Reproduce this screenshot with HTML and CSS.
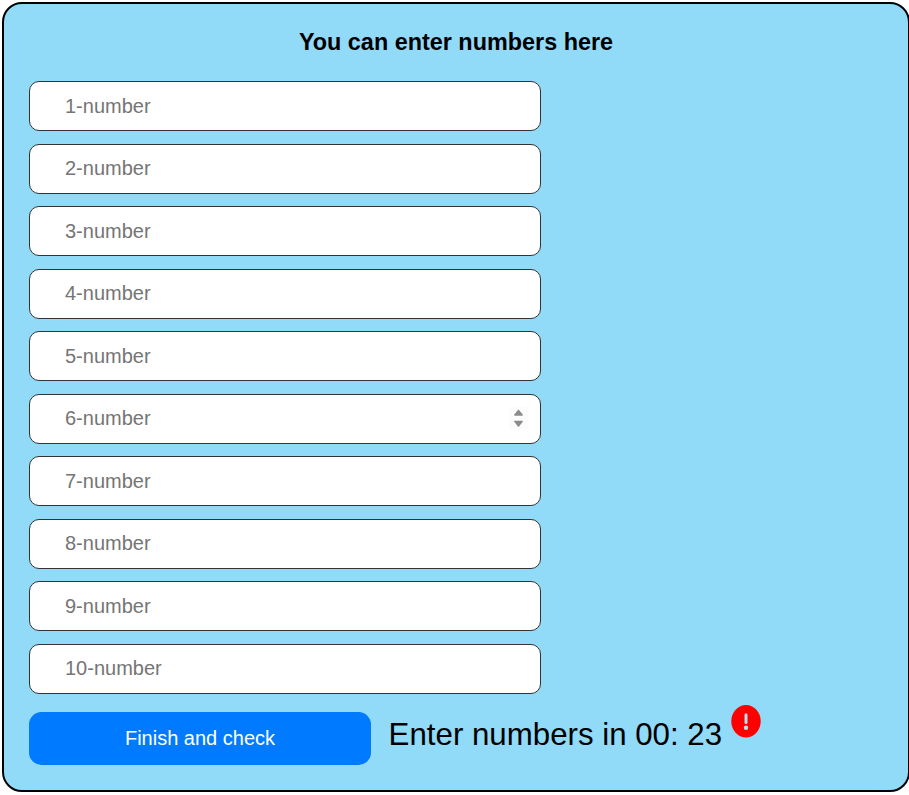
FILE: index.html
```html
<!DOCTYPE html>
<html lang="en">
<head>
<meta charset="utf-8">
<title>Numbers</title>
<link rel="stylesheet" href="styles.css">
</head>
<body>
<main class="panel">
  <h1 class="title">You can enter numbers here</h1>
  <form class="fields">
    <div class="field"><input class="input" type="text" placeholder="1-number"></div>
    <div class="field"><input class="input" type="text" placeholder="2-number"></div>
    <div class="field"><input class="input" type="text" placeholder="3-number"></div>
    <div class="field"><input class="input" type="text" placeholder="4-number"></div>
    <div class="field"><input class="input" type="text" placeholder="5-number"></div>
    <div class="field">
      <input class="input" type="text" placeholder="6-number">
      <svg class="spinner" width="19" height="22" viewBox="0 0 19 22">
        <rect width="19" height="22" fill="#fcfcfc"/>
        <path d="M9.5 3.4 13.2 8H5.8Z M9.5 19 13.2 14.4H5.8Z" fill="#8b8b8b" stroke="#8b8b8b" stroke-width="1.4" stroke-linejoin="round"/>
      </svg>
    </div>
    <div class="field"><input class="input" type="text" placeholder="7-number"></div>
    <div class="field"><input class="input" type="text" placeholder="8-number"></div>
    <div class="field"><input class="input" type="text" placeholder="9-number"></div>
    <div class="field"><input class="input" type="text" placeholder="10-number"></div>
  </form>
  <div class="footer">
    <button class="submit" type="button">Finish and check</button>
    <p class="timer">Enter numbers in 00: 23</p>
    <svg class="alert" width="30" height="33" viewBox="0 0 30 33">
      <ellipse cx="15" cy="16.3" rx="14.7" ry="16.2" fill="#f00"/>
      <path d="M15 9.7V17.4" stroke="#b9dff0" stroke-width="3" stroke-linecap="round"/>
      <ellipse cx="15" cy="22.8" rx="2.2" ry="2.3" fill="#b9dff0"/>
    </svg>
  </div>
</main>
</body>
</html>
```

FILE: styles.css
```css
* { box-sizing: border-box; }
html { overflow: hidden; }
body {
  margin: 0;
  padding: 2px;
  background: #fff;
  font-family: Arial, "Liberation Sans", sans-serif;
}
.panel {
  width: 908px;
  height: 790px;
  padding: 25px;
  border: 2px solid #000;
  border-radius: 20px;
  background: #91daf8;
}
.title {
  margin: 0 0 26px;
  line-height: 26px;
  font-size: 23.4px;
  text-align: center;
}
.fields {
  display: grid;
  gap: 12.5px;
  width: 512px;
}
.field { position: relative; height: 50px; }
.input {
  display: block;
  width: 100%;
  height: 50px;
  padding: 0 35px;
  border: 1px solid #333;
  border-radius: 10px;
  background: #fff;
  font: 20px Arial, "Liberation Sans", sans-serif;
}
.input::placeholder { color: #757575; }
.spinner { position: absolute; right: 13px; top: 13.5px; }
.footer {
  display: flex;
  align-items: flex-start;
  margin-top: 10px;
}
.submit {
  width: 342px;
  height: 53px;
  margin-top: 8px;
  border: 0;
  border-radius: 12.5px;
  background: #007bff;
  color: #fff;
  font: 20px Arial, "Liberation Sans", sans-serif;
}
.timer {
  width: 334px;
  margin: 13px 0 0 17.6px;
  line-height: 36px;
  font-size: 31.25px;
  white-space: nowrap;
}
.alert { margin: 1px 0 0 8.4px; }
```
